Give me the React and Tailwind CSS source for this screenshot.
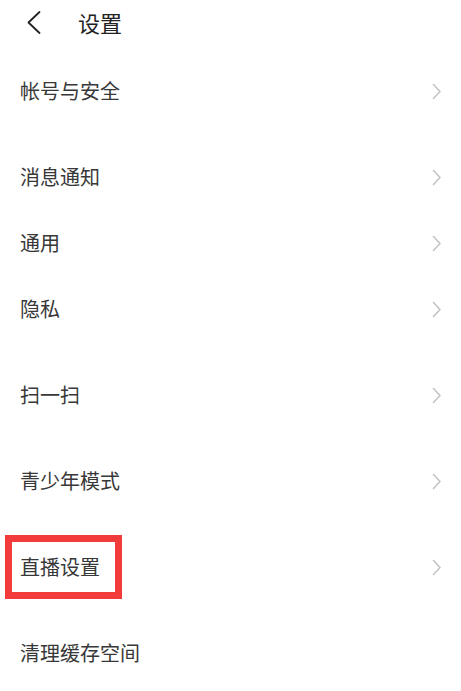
import React from 'react';

const GROUPS = [
  ['帐号与安全'],
  ['消息通知', '通用', '隐私'],
  ['扫一扫'],
  ['青少年模式'],
  ['直播设置'],
  ['清理缓存空间'],
];

const Chevron = () => (
  <svg width="10" height="17" viewBox="0 0 10 17" fill="none">
    <path d="M1.5 1.5 L8 8.5 L1.5 15.5" stroke="#c4c4c4" strokeWidth="1.6" strokeLinecap="round" strokeLinejoin="round" />
  </svg>
);

const Row = ({ label }) => {
  const marked = label === '直播设置';
  // last row has no arrow in the screenshot
  const arrow = label !== '清理缓存空间';
  return (
    <div className="relative flex h-[66px] items-center justify-between pl-5 pr-[19px]">
      <span className="text-[20px] text-[#383838] leading-none">{label}</span>
      {arrow ? <Chevron /> : null}
      {marked ? (
        <div className="absolute left-[5px] top-[1px] h-[64px] w-[117px] border-[7px] border-[#f23b3b]" />
      ) : null}
    </div>
  );
};

export default function App() {
  return (
    <div
      className="w-[461px] h-[691px] overflow-hidden bg-white"
      style={{ fontFamily: '"Noto Sans CJK SC", "Noto Sans", sans-serif' }}
    >
      <div className="flex h-[44px] items-center">
        <div className="flex w-[78px] items-center pl-[27px]">
          <svg width="14" height="23" viewBox="0 0 14 23" fill="none">
            <path d="M12.5 1 L1.5 11.5 L12.5 22" stroke="#222222" strokeWidth="1.8" strokeLinecap="round" strokeLinejoin="round" />
          </svg>
        </div>
        <span className="text-[22px] text-[#222222] leading-none">设置</span>
      </div>
      <div className="mt-[14px] flex flex-col gap-[20px]">
        {GROUPS.map((group, i) => (
          <div key={i} className="flex flex-col">
            {group.map((label) => (
              <Row key={label} label={label} />
            ))}
          </div>
        ))}
      </div>
    </div>
  );
}
